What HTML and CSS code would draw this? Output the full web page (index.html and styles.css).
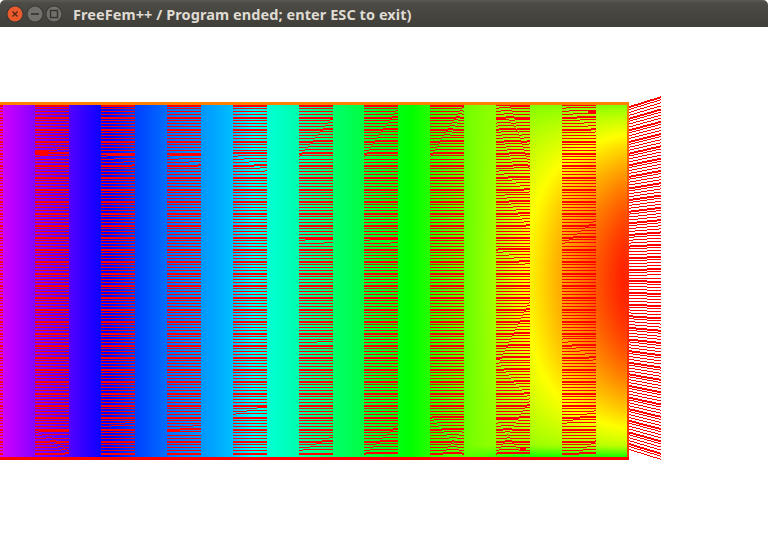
FILE: index.html
```html
<!DOCTYPE html>
<html lang="en">
<head>
<meta charset="utf-8">
<title>FreeFem++ / Program ended; enter ESC to exit)</title>
<link rel="stylesheet" href="styles.css">
</head>
<body>
<div class="window">
  <header class="titlebar">
    <div class="controls">
      <svg class="control" width="18" height="18" viewBox="0 0 18 18">
        <circle cx="9" cy="9" r="8.5" fill="#3a3935"/>
        <circle cx="9" cy="9" r="7.5" fill="#e95a2c"/>
        <path d="M6.5 6.5l5 5M11.5 6.5l-5 5" stroke="#5a2410" stroke-width="1.4" fill="none"/>
      </svg>
      <svg class="control" width="18" height="18" viewBox="0 0 18 18">
        <circle cx="9" cy="9" r="8.5" fill="#3a3935"/>
        <circle cx="9" cy="9" r="7.5" fill="#71706a"/>
        <path d="M5 9h8" stroke="#34332f" stroke-width="1.6" fill="none"/>
      </svg>
      <svg class="control" width="18" height="18" viewBox="0 0 18 18">
        <circle cx="9" cy="9" r="8.5" fill="#3a3935"/>
        <circle cx="9" cy="9" r="7.5" fill="#71706a"/>
        <rect x="5.5" y="5.5" width="7" height="7" stroke="#34332f" stroke-width="1.4" fill="none"/>
      </svg>
    </div>
    <h1 class="title">FreeFem++ / Program ended; enter ESC to exit)</h1>
  </header>
  <canvas id="plot" class="plot" width="768" height="513"></canvas>
</div>
<script src="plot.js"></script>
</body>
</html>
```

FILE: styles.css
```css
html, body {
  margin: 0;
  padding: 0;
  background: #fff;
}
.window {
  width: 768px;
  height: 540px;
  overflow: hidden;
  display: flex;
  flex-direction: column;
  background: #fff;
}
.titlebar {
  flex: 0 0 27px;
  height: 27px;
  display: flex;
  align-items: center;
  padding-left: 6px;
  box-sizing: border-box;
  background: linear-gradient(#5c5a52 0, #4d4b45 3px, #3f3e39 100%);
  border-radius: 5px 5px 0 0;
}
.controls {
  display: flex;
  gap: 1.5px;
  width: 67px;
  margin-top: 1px;
}
.control {
  display: block;
}
.title {
  margin: 0;
  font: 700 14.5px "Noto Sans", "Open Sans", sans-serif;
  letter-spacing: 0.07px;
  color: #dfdbd2;
  white-space: nowrap;
}
.plot {
  display: block;
  flex: 0 0 513px;
}
```

FILE: plot.js
```js
var canvas = document.getElementById('plot');
var ctx = canvas.getContext('2d');
var OY = 27;
var TOP = 105, BOTTOM = 457, RIGHT = 628;

var stops = [[0,290],[35,272],[70,259],[100,243],[135,225],[167,214],[200,205],[233,195],[267,170],[300,160],[333,145],[364,135],[410,120],[470,93],[500,78],[530,57],[560,40],[596,20],[622,8],[630,10]];

function baseHue(x) {
  for (var i = 1; i < stops.length; i++) {
    if (x <= stops[i][0]) {
      var a = stops[i - 1], b = stops[i];
      return a[1] + (b[1] - a[1]) * (x - a[0]) / (b[0] - a[0]);
    }
  }
  return 10;
}

function rgb(h) {
  var c = h / 60, i = Math.floor(c) % 6, f = c - Math.floor(c);
  var r = [[1, f, 0], [1 - f, 1, 0], [0, 1, f], [0, 1 - f, 1], [f, 0, 1], [1, 0, 1 - f]][i];
  return [r[0] * 255, r[1] * 255, r[2] * 255];
}

function hue(x, y) {
  var t = Math.min(1, Math.max(0, (y - TOP) / (BOTTOM - TOP)));
  var w = Math.min(1, Math.max(0, (x - 440) / 80));
  w = w * w * (3 - 2 * w);
  var g = Math.pow(Math.sin(Math.PI * t), 0.75);
  var edge = 90 + 30 * Math.max(0, (t - 0.965) / 0.035);
  var h0 = baseHue(x);
  return edge + (h0 - edge) * (1 - w * (1 - g));
}

var img = ctx.createImageData(768, 513);
for (var py = 0; py < 513; py++) {
  for (var px = 0; px < 768; px++) {
    var k = (py * 768 + px) * 4, y = py + OY, col = [255, 255, 255];
    if (px < RIGHT && y >= TOP && y < BOTTOM) col = rgb(hue(px, y));
    img.data[k] = col[0];
    img.data[k + 1] = col[1];
    img.data[k + 2] = col[2];
    img.data[k + 3] = 255;
  }
}
ctx.putImageData(img, 0, 0);

function rect(x, y, w, h, c) {
  ctx.fillStyle = c;
  ctx.fillRect(x, y - OY, w, h);
}

/* mesh columns: [left, right, [yStart, yEnd, xStart, xEnd], ...] */
var columns = [
  [-31, 3],
  [35, 69, [148, 156, 62, 40], [430, 456, 36, 69], [436, 452, 50, 69]],
  [101, 135, [155, 166, 104, 135], [421, 428, 135, 101]],
  [167, 201, [155, 166, 167, 201], [424, 432, 201, 167]],
  [233, 267, [153, 172, 233, 267], [405, 415, 267, 233]],
  [299, 333, [117, 157, 333, 299], [436, 452, 333, 299], [240, 244, 305, 330], [340, 344, 300, 333]],
  [364, 398, [108, 157, 398, 364], [425, 455, 398, 364], [240, 244, 370, 398]],
  [430, 464, [105, 157, 464, 430], [110, 135, 464, 450], [415, 456, 430, 464], [430, 456, 464, 440]],
  [496, 530, [105, 145, 496, 530], [105, 170, 510, 530], [120, 170, 496, 515], [170, 193, 498, 530], [195, 225, 505, 526], [248, 267, 496, 530], [300, 360, 530, 500], [360, 400, 496, 530], [400, 455, 530, 496], [420, 452, 496, 520]],
  [562, 596, [105, 133, 562, 596], [220, 245, 596, 562], [338, 362, 562, 596], [410, 425, 596, 562], [440, 456, 596, 575]]
];

var RED = '#ff0000';
for (var c = 0; c < columns.length; c++) {
  var cd = columns[c], xa = cd[0], xb = cd[1];
  for (var i = 0; i < 117; i++) {
    var ly = 105 + i * 3;
    var thick = i % 4 === 0 ? 2 : 1;
    var breaks = [];
    for (var r = 2; r < cd.length; r++) {
      var run = cd[r];
      if (ly >= run[0] && ly <= run[1]) {
        breaks.push(Math.round(run[2] + (run[3] - run[2]) * (ly - run[0]) / (run[1] - run[0])));
      }
    }
    breaks.sort(function (a, b) { return a - b; });
    var sx = xa, off = 0;
    breaks.push(xb);
    for (var b = 0; b < breaks.length; b++) {
      var ex = breaks[b];
      rect(Math.max(sx, 0), ly - off, ex - Math.max(sx, 0), thick, RED);
      sx = ex;
      off = off ? 0 : 1;
    }
  }
}
rect(101, 249, 34, 2, RED);
rect(167, 249, 34, 2, RED);
rect(233, 249, 34, 2, RED);
rect(35, 151, 14, 2, RED);
rect(588, 110, 8, 3, RED);
rect(520, 448, 6, 2, RED);

/* trapezoid of mesh lines past the right edge */
for (var j = 0; j < 119; j++) {
  var yl = 106 + j * (449 - 106) / 118;
  var yr = 96 + j * (459 - 96) / 118;
  for (var x = 629; x < 661; x++) {
    var f = (x - 629) / 32;
    var yy = Math.round(yl + (yr - yl) * f);
    rect(x, yy, 1, j % 4 === 0 ? 2 : 1, RED);
  }
}

/* outline of the square */
rect(0, 102, 628, 3, '#ff8000');
for (var e = 102; e < 460; e++) {
  var tt = (e - 102) / 358;
  var hh = tt < 0.5 ? 30 - 44 * tt : 8 + 12 * (tt - 0.5);
  var cc = rgb(Math.max(hh, 1));
  rect(627, e, 2, 1, 'rgb(' + Math.round(cc[0]) + ',' + Math.round(cc[1]) + ',0)');
}
rect(0, 457, 629, 3, RED);
```
